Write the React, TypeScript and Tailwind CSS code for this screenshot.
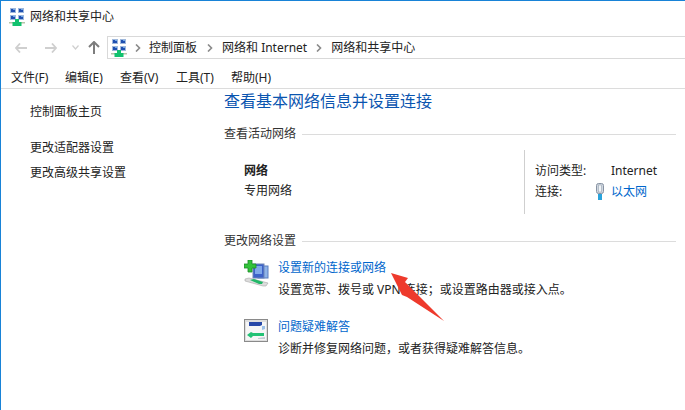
import React from "react";

const font = { fontFamily: '"Noto Sans", "Noto Sans CJK SC", sans-serif' };

function NetIcon() {
  const squares = [
    [1, 0],
    [9, 0],
    [1, 7],
    [9, 7],
  ];
  return (
    <svg width="16" height="18" viewBox="0 0 16 18" className="shrink-0">
      {squares.map(([x, y]) => (
        <g key={`${x}-${y}`}>
          <rect x={x} y={y} width="6" height="5" fill="#9fb8dc" />
          <rect x={x + 1} y={y + 1} width="4" height="3" fill="#1f4fb0" />
          <rect x={x + 3} y={y + 1} width="2" height="1" fill="#6fa8e8" />
        </g>
      ))}
      <rect x="0" y="14" width="16" height="1.5" fill="#b5c4a8" />
      <path d="M6 11h4v3h2.5v4h-9v-4H6z" fill="#12c26f" />
    </svg>
  );
}

function Chevron() {
  return (
    <svg width="6" height="8" viewBox="0 0 6 8" className="shrink-0">
      <path d="M1 0.5L4.5 4 1 7.5" fill="none" stroke="#8a8a8a" strokeWidth="1.6" />
    </svg>
  );
}

function SetupIcon() {
  return (
    <svg width="26" height="27" viewBox="0 0 26 27" className="shrink-0">
      <rect x="14" y="6" width="10" height="12" fill="#8fb4e8" stroke="#5a7fc0" />
      <rect x="9" y="4" width="11" height="14" fill="#3d62c8" stroke="#6f86b8" />
      <rect x="11" y="6" width="7" height="8" fill="#7fa8ea" />
      <path d="M1 19l4-1 19 5-2 3h-3L1 21z" fill="#dcdcdc" stroke="#a8a8a8" strokeWidth="0.6" />
      <path d="M6 20l4-1 9 3-1 2h-3z" fill="#22b868" />
      <path d="M4 0h4v4h4v4H8v4H4V8H0V4h4z" fill="#33c23a" stroke="#1d8a2a" strokeWidth="0.8" />
    </svg>
  );
}

function TroubleIcon() {
  return (
    <svg width="24" height="24" viewBox="0 0 24 24" className="shrink-0">
      <rect x="0.5" y="0.5" width="23" height="22" fill="#dedede" stroke="#8a8a8a" />
      <rect x="2" y="3" width="20" height="18" fill="#f6f6f6" />
      <path d="M5 3h13v3l-2 1H5z" fill="#2748a8" />
      <path d="M18 7h3v3l-3 1z" fill="#9cc0e8" />
      <path d="M3 16l4-3 2 1h11v3H9l-2 2z" fill="#23c275" />
      <path d="M14 19l7-1v2h-7z" fill="#c4ccd4" />
    </svg>
  );
}

function PlugIcon() {
  return (
    <svg width="8" height="17" viewBox="0 0 8 17" className="shrink-0">
      <rect x="0.5" y="0.5" width="7" height="10" rx="2" fill="#cfd6e0" stroke="#8793a3" />
      <rect x="2.5" y="2" width="3" height="7" fill="#f0f3f6" stroke="#9aa6b2" strokeWidth="0.6" />
      <rect x="2" y="11" width="4" height="6" fill="#29a3dc" />
    </svg>
  );
}

function SectionTitle({ children }: { children: React.ReactNode }) {
  return (
    <div className="flex items-center gap-[6px] text-[12px] leading-[16px] text-[#333]">
      <span>{children}</span>
      <div className="h-px flex-1 bg-[#dcdcdc]" />
    </div>
  );
}

function Task({ icon, title, desc }: { icon: React.ReactNode; title: string; desc: string }) {
  return (
    <div className="flex gap-[10px]">
      <div className="w-[24px]">{icon}</div>
      <div>
        <div className="text-[12px] leading-[16px] text-[#0066cc]">{title}</div>
        <div className="mt-[6px] text-[12px] leading-[16px] text-[#222]">{desc}</div>
      </div>
    </div>
  );
}

export default function App() {
  return (
    <div style={font} className="relative h-[410px] w-[685px] overflow-hidden border-l border-t border-[#1883d7] bg-white">
      <div className="flex h-[35px] items-center gap-[5px] pb-[4px] pl-[8px] text-[12px] text-[#222]">
        <NetIcon />
        <span>网络和共享中心</span>
      </div>
      <div className="flex h-[23px] items-stretch">
        <div className="flex w-[106px] items-center pl-[14px]">
          <svg width="12" height="10" viewBox="0 0 12 10" className="shrink-0">
            <path d="M5 0.5L1 5l4 4.5M1 5h11" fill="none" stroke="#cfcfcf" strokeWidth="1.8" />
          </svg>
          <svg width="12" height="10" viewBox="0 0 12 10" className="ml-[18px] shrink-0">
            <path d="M7 0.5L11 5l-4 4.5M11 5H0" fill="none" stroke="#cfcfcf" strokeWidth="1.8" />
          </svg>
          <svg width="7" height="5" viewBox="0 0 7 5" className="ml-[15px] shrink-0">
            <path d="M0.5 0.5L3.5 4l3-3.5" fill="none" stroke="#cfcfcf" strokeWidth="1.2" />
          </svg>
          <svg width="12" height="13" viewBox="0 0 12 13" className="ml-[9px] shrink-0">
            <path d="M1 6l5-5 5 5M6 1v12" fill="none" stroke="#7d7d7d" strokeWidth="2" />
          </svg>
        </div>
        <div className="flex flex-1 items-center border-y border-l border-[#d9d9d9] pl-[3px] text-[12px] text-[#222]">
          <NetIcon />
          <div className="ml-[8px]"><Chevron /></div>
          <span className="ml-[8px]">控制面板</span>
          <div className="ml-[10px]"><Chevron /></div>
          <span className="ml-[9px]">网络和 Internet</span>
          <div className="ml-[9px]"><Chevron /></div>
          <span className="ml-[9px]">网络和共享中心</span>
        </div>
      </div>
      <div className="mt-[7px] flex h-[23px] items-center border-b border-[#dcdcdc] pl-[10px] pt-[1px] text-[12px] text-[#222]">
        <span className="w-[54px]">文件(F)</span>
        <span className="w-[55px]">编辑(E)</span>
        <span className="w-[56px]">查看(V)</span>
        <span className="w-[55px]">工具(T)</span>
        <span>帮助(H)</span>
      </div>
      <div className="flex">
        <div className="w-[223px] pl-[29px] pt-[15px] text-[12px] leading-[16px] text-[#222]">
          <div>控制面板主页</div>
          <div className="mt-[20px]">更改适配器设置</div>
          <div className="mt-[9px]">更改高级共享设置</div>
        </div>
        <div className="flex-1 pr-[9px]">
          <div className="pt-[1px] text-[16px] leading-[22px] text-[#0a55b0]">查看基本网络信息并设置连接</div>
          <div className="mt-[14px]"><SectionTitle>查看活动网络</SectionTitle></div>
          <div className="flex h-[75px] pt-[8px]">
            <div className="w-[300px] pl-[20px] pt-[13px] text-[12px] leading-[16px] text-[#222]">
              <div className="font-bold">网络</div>
              <div className="mt-[4px]">专用网络</div>
            </div>
            <div className="flex h-[64px] flex-1 flex-col gap-[4px] border-l border-[#cfcfcf] pl-[10px] pt-[13px] text-[12px] leading-[16px] text-[#222]">
              <div className="flex"><span className="w-[76px]">访问类型:</span><span>Internet</span></div>
              <div className="flex items-center"><span className="w-[61px]">连接:</span><PlugIcon /><span className="ml-[7px] text-[#0066cc]">以太网</span></div>
            </div>
          </div>
          <div className="mt-[16px]"><SectionTitle>更改网络设置</SectionTitle></div>
          <div className="mt-[11px] pl-[20px]">
            <Task icon={<SetupIcon />} title="设置新的连接或网络" desc="设置宽带、拨号或 VPN 连接；或设置路由器或接入点。" />
            <div className="mt-[21px]">
              <Task icon={<TroubleIcon />} title="问题疑难解答" desc="诊断并修复网络问题，或者获得疑难解答信息。" />
            </div>
          </div>
        </div>
      </div>
      <svg width="60" height="56" viewBox="0 0 60 56" className="absolute left-[388px] top-[269px]">
        <path d="M2 3L19 8 16 12 55 51 18 27 13 25z" fill="#ee3a2c" />
      </svg>
    </div>
  );
}
